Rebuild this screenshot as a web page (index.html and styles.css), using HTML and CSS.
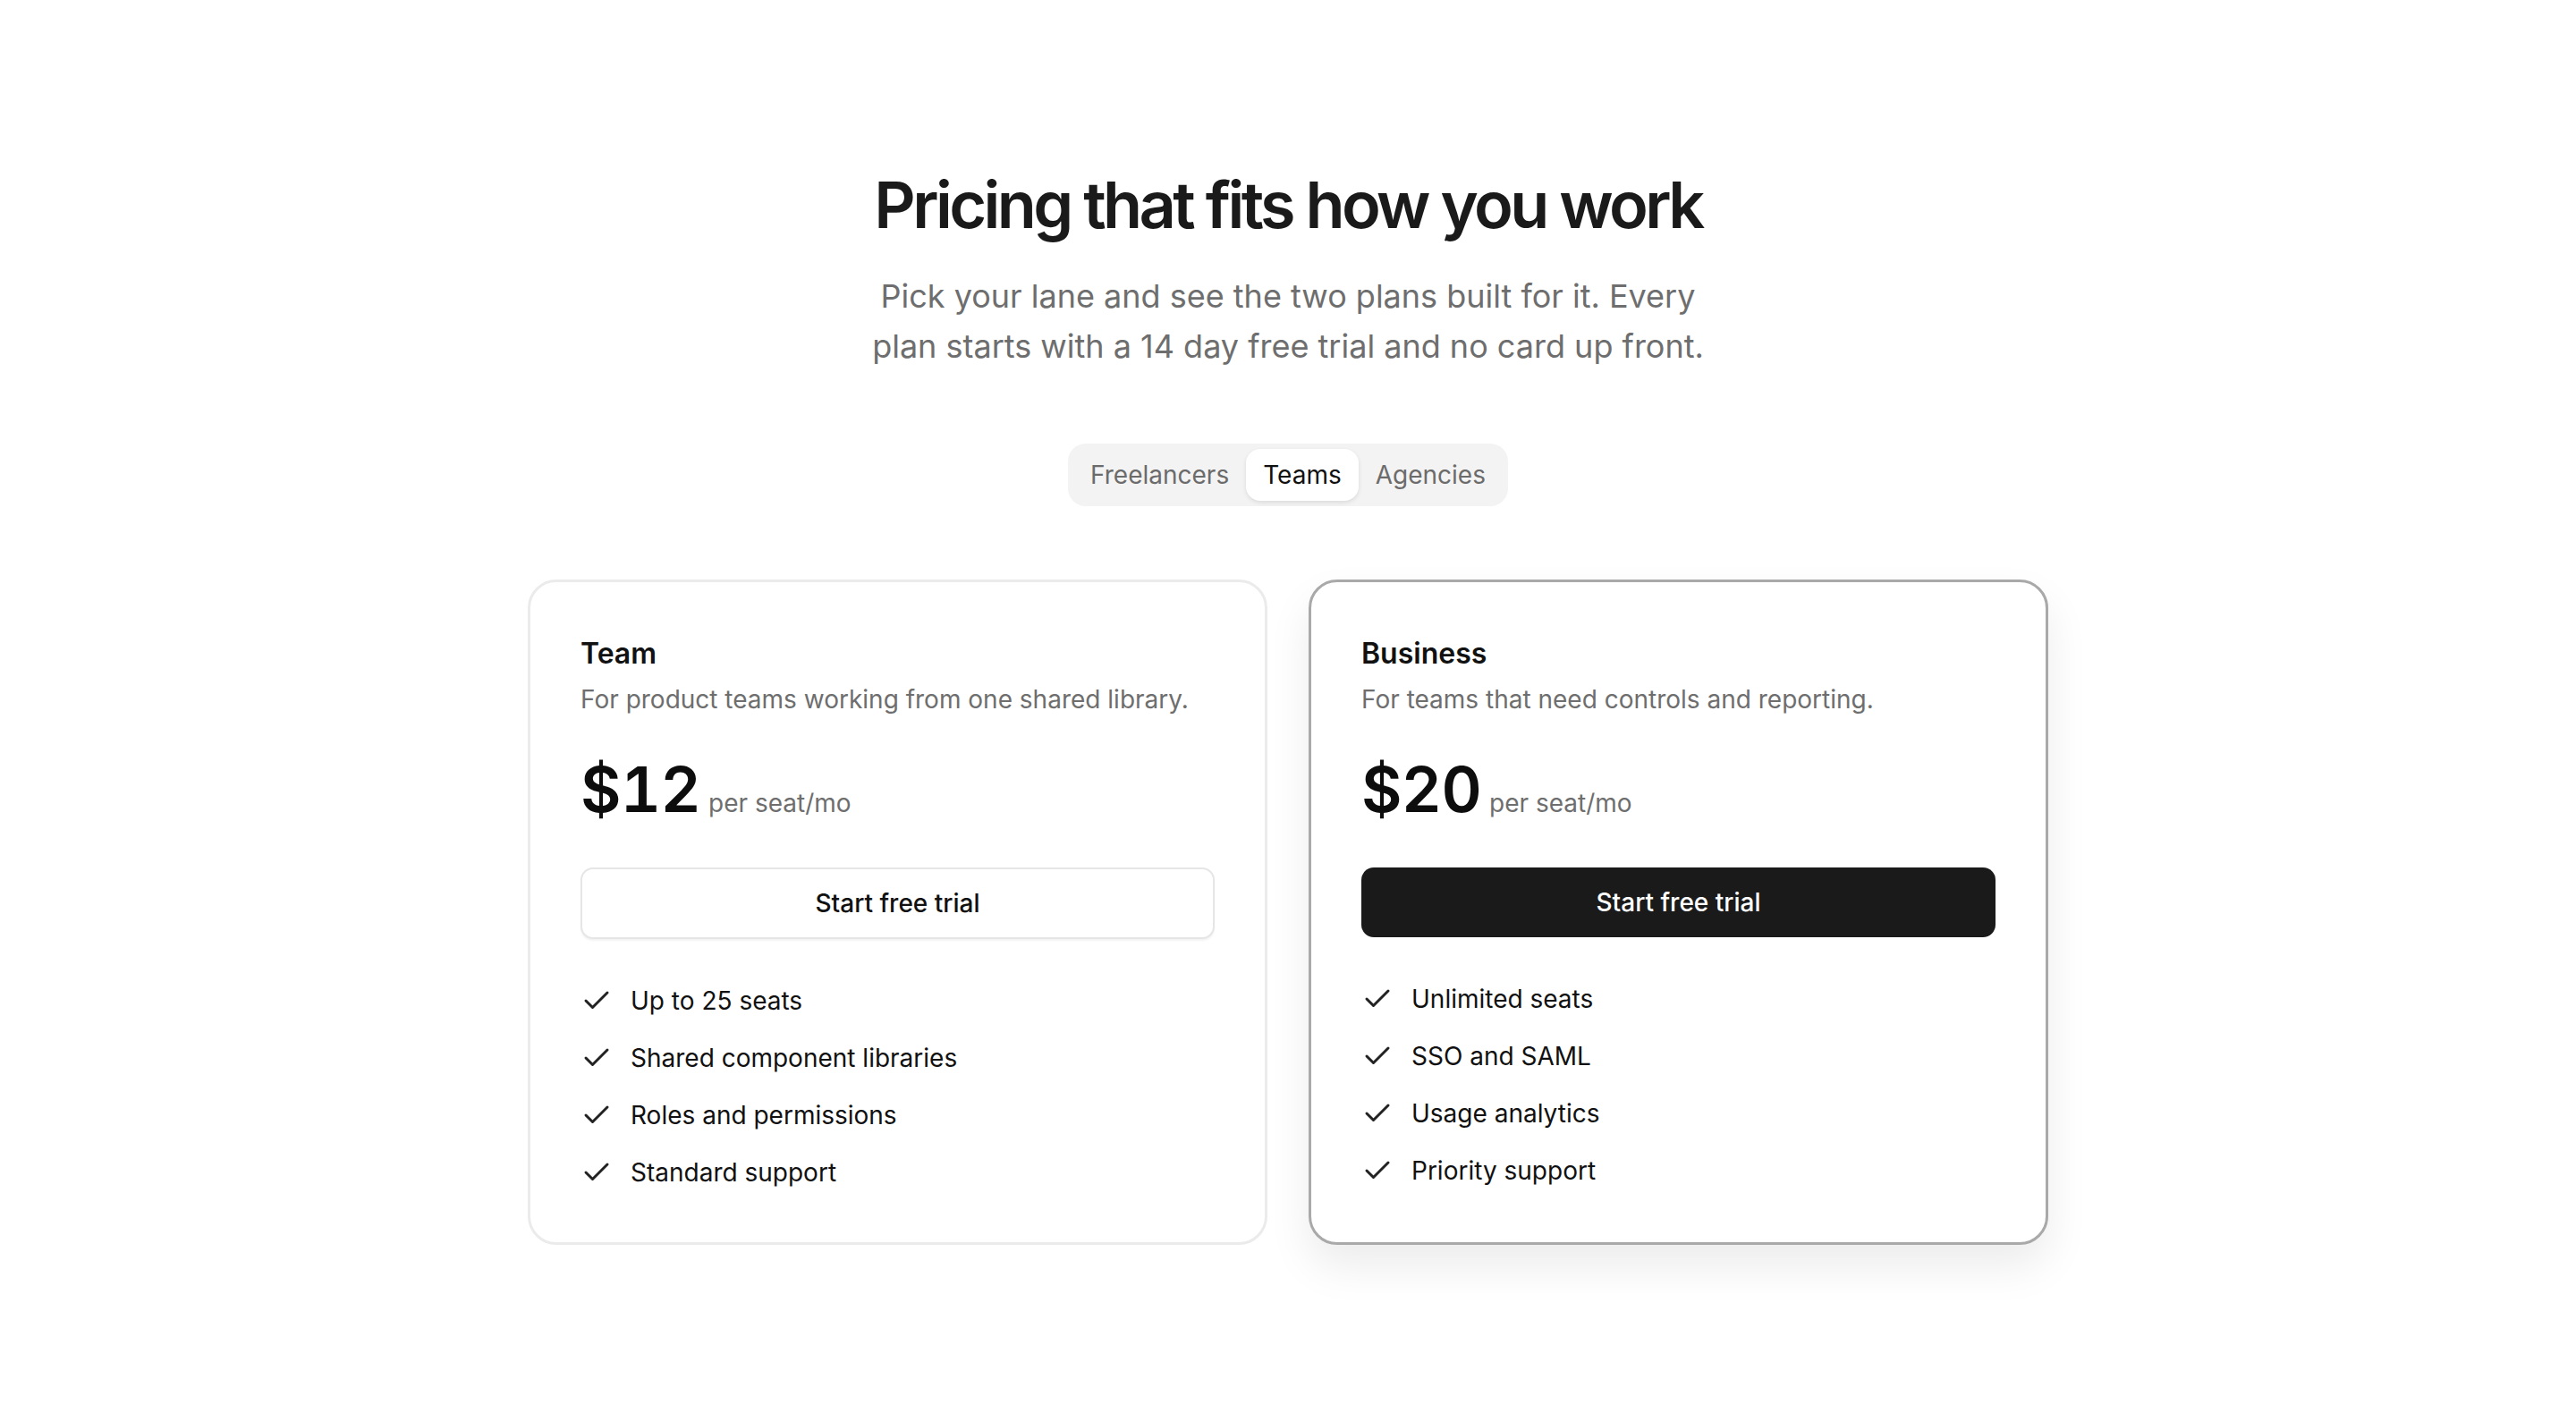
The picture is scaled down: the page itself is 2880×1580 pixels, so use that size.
FILE: index.html
```html
<!DOCTYPE html>
<html lang="en">

<head>
    <meta charset="UTF-8">
    <meta name="viewport" content="width=device-width, initial-scale=1.0">
    <title>Pricing</title>
    <link rel="stylesheet" href="styles.css">
</head>

<body>
    <main class="pricing">
        <header class="pricing-header">
            <h1>Pricing that fits how you work</h1>
            <p class="lead">Pick your lane and see the two plans built for it. Every plan starts with a 14 day free trial and no card up front.</p>
        </header>

        <div class="segmented" role="tablist">
            <button type="button" class="segment">Freelancers</button>
            <button type="button" class="segment active">Teams</button>
            <button type="button" class="segment">Agencies</button>
        </div>

        <div class="plans">
            <section class="plan">
                <h2>Team</h2>
                <p class="plan-desc">For product teams working from one shared library.</p>
                <div class="price">
                    <span class="amount">$12</span>
                    <span class="unit">per seat/mo</span>
                </div>
                <button type="button" class="btn btn-outline">Start free trial</button>
                <ul class="features">
                    <li><svg class="check" viewBox="0 0 24 24"><path d="M20 6 9 17l-5-5"/></svg>Up to 25 seats</li>
                    <li><svg class="check" viewBox="0 0 24 24"><path d="M20 6 9 17l-5-5"/></svg>Shared component libraries</li>
                    <li><svg class="check" viewBox="0 0 24 24"><path d="M20 6 9 17l-5-5"/></svg>Roles and permissions</li>
                    <li><svg class="check" viewBox="0 0 24 24"><path d="M20 6 9 17l-5-5"/></svg>Standard support</li>
                </ul>
            </section>

            <section class="plan featured">
                <h2>Business</h2>
                <p class="plan-desc">For teams that need controls and reporting.</p>
                <div class="price">
                    <span class="amount">$20</span>
                    <span class="unit">per seat/mo</span>
                </div>
                <button type="button" class="btn btn-dark">Start free trial</button>
                <ul class="features">
                    <li><svg class="check" viewBox="0 0 24 24"><path d="M20 6 9 17l-5-5"/></svg>Unlimited seats</li>
                    <li><svg class="check" viewBox="0 0 24 24"><path d="M20 6 9 17l-5-5"/></svg>SSO and SAML</li>
                    <li><svg class="check" viewBox="0 0 24 24"><path d="M20 6 9 17l-5-5"/></svg>Usage analytics</li>
                    <li><svg class="check" viewBox="0 0 24 24"><path d="M20 6 9 17l-5-5"/></svg>Priority support</li>
                </ul>
            </section>
        </div>
    </main>
</body>

</html>
```

FILE: styles.css
```css
* {
    box-sizing: border-box;
}

body {
    margin: 0;
    font-family: Inter, "Noto Sans", sans-serif;
    background: #fff;
    color: #111;
}

.pricing {
    display: flex;
    flex-direction: column;
    align-items: center;
    padding: 189px 20px 120px;
}

.pricing-header {
    text-align: center;
}

h1 {
    margin: 0;
    font-size: 72px;
    line-height: 1.1;
    font-weight: 600;
    letter-spacing: -0.05em;
    color: #1a1a1a;
}

.lead {
    max-width: 960px;
    margin: 35px auto 0;
    font-size: 36px;
    line-height: 56px;
    color: #6e6e6e;
}

.segmented {
    display: flex;
    margin-top: 81px;
    padding: 6px;
    background: #f3f3f3;
    border-radius: 20px;
}

.segment {
    font-family: inherit;
    font-size: 28px;
    line-height: 38px;
    padding: 10px 19px;
    border: none;
    border-radius: 16px;
    background: transparent;
    color: #6b6b6b;
    cursor: pointer;
}

.segment.active {
    background: #fff;
    color: #111;
    box-shadow: 0 2px 5px rgba(0, 0, 0, 0.1);
}

.plans {
    display: grid;
    grid-template-columns: 1fr 1fr;
    gap: 46px;
    width: 1700px;
    margin-top: 82px;
}

.plan {
    padding: 60px 56px 58px;
    border: 3px solid #ebebeb;
    border-radius: 32px;
    background: #fff;
}

.plan.featured {
    border-color: #a9a9a9;
    box-shadow: 0 24px 48px rgba(0, 0, 0, 0.08);
}

.plan h2 {
    margin: 0;
    font-size: 32px;
    line-height: 40px;
    font-weight: 600;
    color: #111;
}

.plan-desc {
    margin: 10px 0 0;
    font-size: 28px;
    line-height: 42px;
    color: #6e6e6e;
}

.price {
    display: flex;
    align-items: baseline;
    gap: 9px;
    margin-top: 48px;
}

.amount {
    font-size: 70px;
    line-height: 64px;
    font-weight: 600;
    letter-spacing: -0.01em;
    font-variant-numeric: tabular-nums;
    color: #0d0d0d;
}

.unit {
    font-size: 28px;
    color: #6e6e6e;
}

.btn {
    display: block;
    width: 100%;
    height: 80px;
    margin-top: 55px;
    font-family: inherit;
    font-size: 28px;
    font-weight: 500;
    border-radius: 14px;
    cursor: pointer;
}

.btn-outline {
    background: #fff;
    color: #111;
    border: 2px solid #e6e6e6;
    box-shadow: 0 2px 2px rgba(0, 0, 0, 0.05);
}

.btn-dark {
    height: 78px;
    margin-bottom: 2px;
    background: #1a1a1a;
    color: #fff;
    border: none;
}

.features {
    list-style: none;
    margin: 49px 0 0;
    padding: 0;
    display: flex;
    flex-direction: column;
    gap: 24px;
}

.features li {
    display: flex;
    align-items: center;
    gap: 20px;
    font-size: 28px;
    line-height: 40px;
    color: #111;
}

.check {
    width: 36px;
    height: 36px;
    flex-shrink: 0;
    fill: none;
    stroke: #222;
    stroke-width: 2;
    stroke-linecap: round;
    stroke-linejoin: round;
}
```
